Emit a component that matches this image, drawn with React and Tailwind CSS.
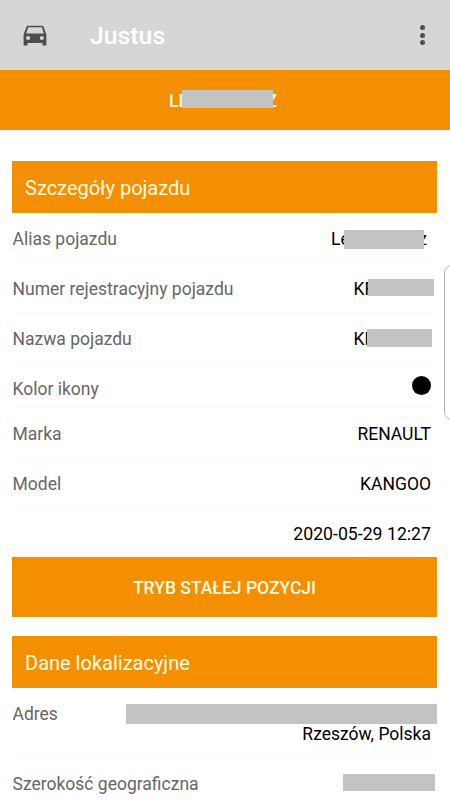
import React from "react";

const VehicleIcon = () => (
  <svg
    className="h-[30px] w-[30px] -translate-y-[1.5px]"
    viewBox="0 0 24 24"
    fill="#4d4d4d"
  >
    <path d="M18.92 5.9C18.72 5.3 18.16 4.9 17.5 4.9h-11c-.66 0-1.21.4-1.42 1L2.9 12v8.8h3.1V18.8h12v2H21.1V12l-2.18-6.1zM6.5 16.3c-.88 0-1.6-.72-1.6-1.6s.72-1.6 1.6-1.6 1.6.72 1.6 1.6-.72 1.6-1.6 1.6zm11 0c-.88 0-1.6-.72-1.6-1.6s.72-1.6 1.6-1.6 1.6.72 1.6 1.6-.72 1.6-1.6 1.6zM4.9 11.2l1.7-5h10.8l1.7 5H4.9z" />
  </svg>
);

const SectionHeader = ({ children }) => (
  <div className="flex h-[52px] items-center bg-[#f48f02] pl-[13px] pt-0.5 text-[20px] text-[#fffbe0]">
    {children}
  </div>
);

// value whose middle part is hidden under a grey bar
const Masked = ({ start, end, className, bar }) => (
  <span className={`relative flex justify-between ${className}`}>
    <span>{start}</span>
    <span>{end}</span>
    <span className={`absolute bg-[#c3c3c3] ${bar}`} />
  </span>
);

const Row = ({ label, height = "h-[50px]", children }) => (
  <div
    className={`flex justify-between border-b border-[#fbfbfb] pl-[0.5px] pr-[6px] pt-4 leading-5 ${height}`}
  >
    <span className="whitespace-nowrap text-[#666]">{label}</span>
    {children}
  </div>
);

const App = () => {
  return (
    <div className="relative h-[800px] w-[450px] overflow-hidden bg-white font-['Roboto',sans-serif] text-[17.5px] text-black">
      {/* App bar */}
      <header className="flex h-[70px] items-center bg-[#d6d6d6] pl-5 pr-3 pt-0.5">
        <VehicleIcon />
        <h1 className="ml-10 flex-1 text-[24.8px] font-medium leading-9 text-white">
          Justus
        </h1>
        <div className="mr-[13px] flex -translate-y-px flex-col gap-[2.5px]">
          <span className="h-[5px] w-[5px] rounded-full bg-[#505050]" />
          <span className="h-[5px] w-[5px] rounded-full bg-[#505050]" />
          <span className="h-[5px] w-[5px] rounded-full bg-[#505050]" />
        </div>
      </header>

      {/* Vehicle tab */}
      <div className="flex h-[60px] items-center bg-[#f48f02] pl-[169px] pt-0.5 font-medium text-[#fffbe0]">
        <Masked
          start="LE"
          end="Z"
          className="w-[108px] leading-5"
          bar="left-[13px] right-1 -top-px h-[18px]"
        />
      </div>

      <main className="ml-3 mr-[13px] mt-[31px]">
        <SectionHeader>Szczegóły pojazdu</SectionHeader>
        <Row label="Alias pojazdu">
          <Masked
            start="Le"
            end="z"
            className="mr-[4px] w-[96px]"
            bar="left-[13px] right-[3px] top-[1px] h-[19px]"
          />
        </Row>
        <Row label="Numer rejestracyjny pojazdu">
          <Masked
            start="KR"
            className="w-[77.5px]"
            bar="-right-[3px] left-[14.5px] top-0 h-[17px]"
          />
        </Row>
        <Row label="Nazwa pojazdu">
          <Masked
            start="KR"
            className="w-[77.5px]"
            bar="-right-[1px] left-[13.5px] top-0 h-[18px]"
          />
        </Row>
        <Row label="Kolor ikony" height="h-[45px]">
          <span className="-mt-[3px] h-[19px] w-[19px] rounded-full bg-black" />
        </Row>
        <Row label="Marka">RENAULT</Row>
        <Row label="Model">KANGOO</Row>
        <Row height="h-[49px]">
          <span className="text-[17.7px]">2020-05-29 12:27</span>
        </Row>

        <button className="mb-[19px] flex h-[60px] w-full items-center justify-center bg-[#f48f02] pt-0.5 text-[17.5px] font-medium text-[#fffbe0]">
          TRYB STAŁEJ POZYCJI
        </button>

        <SectionHeader>Dane lokalizacyjne</SectionHeader>
        <Row label="Adres" height="h-[70px]">
          <div className="-mr-[6px] flex flex-col items-end">
            <span className="h-[20px] w-[311px] bg-[#c3c3c3]" />
            <span className="pr-[6px]">Rzeszów, Polska</span>
          </div>
        </Row>
        <Row label="Szerokość geograficzna">
          <span className="-mr-[4px] h-[17px] w-[92px] bg-[#c3c3c3]" />
        </Row>
      </main>

      {/* Edge panel handle */}
      <div className="absolute -right-[10px] top-[265px] h-[155px] w-4 rounded-l-lg border border-[#b5b5b5] bg-white" />
    </div>
  );
};

export default App;
